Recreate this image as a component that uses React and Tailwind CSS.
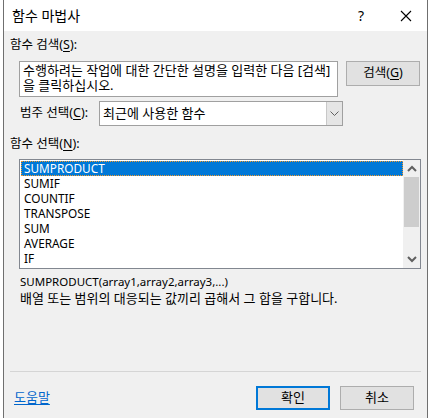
import React from "react";

const items = ["SUMPRODUCT", "SUMIF", "COUNTIF", "TRANSPOSE", "SUM", "AVERAGE", "IF"];

function U({ children }) {
    return <span className="underline underline-offset-2">{children}</span>;
}

export default function App() {
    return (
        <div className="w-[430px] h-[418px] bg-white overflow-hidden" style={{ fontFamily: '"Noto Sans", "Noto Sans CJK KR", sans-serif' }}>
            <div className="ml-[3px] w-[425px] h-[418px] border-x border-[#6f6f6f] flex flex-col text-[12px] text-black">
                {/* title bar */}
                <div className="h-[31px] bg-white flex items-center shrink-0">
                    <span className="ml-[8px] text-[14px]">함수 마법사</span>
                    <span className="ml-auto mr-[36px] text-[14px]">?</span>
                    <svg width="12" height="12" viewBox="0 0 12 12" className="mr-[15px]">
                        <path d="M1 1 L11 11 M11 1 L1 11" stroke="#000" strokeWidth="1.1" />
                    </svg>
                </div>

                <div className="flex-1 bg-[#f0f0f0] px-[6px] flex flex-col">
                    <div className="mt-[6px] h-[16px] leading-[16px] text-[12.5px]">
                        함수 검색(<U>S</U>):
                    </div>

                    <div className="mt-[8px] flex items-start">
                        <div className="ml-[9px] w-[319px] h-[36px] bg-white border border-[#a0a0a0] px-[3px] pt-[1px] leading-[15px] text-[13px] whitespace-nowrap">
                            수행하려는 작업에 대한 간단한 설명을 입력한 다음 [검색]
                            <br />을 클릭하십시오.
                        </div>
                        <button className="ml-[8px] w-[74px] h-[25px] bg-[#e1e1e1] border border-[#adadad] text-[12.5px] flex items-center justify-center">
                            검색(<U>G</U>)
                        </button>
                    </div>

                    <div className="mt-[4px] flex items-center">
                        <span className="ml-[10px] w-[79px] text-[12.5px]">
                            범주 선택(<U>C</U>):
                        </span>
                        <div className="w-[244px] h-[25px] bg-white border border-[#a0a0a0] flex items-stretch">
                            <span className="flex-1 pl-[3px] flex items-center text-[13px]">최근에 사용한 함수</span>
                            <span className="w-[16px] bg-[#e5e5e5] border-l border-[#c8c8c8] flex items-center justify-center">
                                <svg width="9" height="6" viewBox="0 0 9 6">
                                    <path d="M0.5 0.5 L4.5 4.5 L8.5 0.5" fill="none" stroke="#606060" strokeWidth="1" />
                                </svg>
                            </span>
                        </div>
                    </div>

                    <div className="mt-[10px] h-[16px] leading-[16px] text-[12.5px]">
                        함수 선택(<U>N</U>):
                    </div>

                    <div className="mt-[7px] ml-[9px] w-[402px] h-[110px] bg-white border border-[#828790] flex">
                        <div className="flex-1 pt-[1px] pl-[1px] text-[11.8px]">
                            {items.map((it, i) => (
                                <div
                                    key={it}
                                    className={
                                        i === 0
                                            ? "h-[15px] leading-[13px] pl-[2px] bg-[#0078d7] text-white border border-dotted border-[#f39a2b]"
                                            : "h-[15px] leading-[15px] pl-[3px]"
                                    }
                                >
                                    {it}
                                </div>
                            ))}
                        </div>
                        <div className="w-[17px] bg-[#f0f0f0] flex flex-col items-center">
                            <div className="h-[17px] flex items-center justify-center">
                                <svg width="10" height="7" viewBox="0 0 10 7">
                                    <path d="M1 6 L5 2 L9 6" fill="none" stroke="#606060" strokeWidth="2" />
                                </svg>
                            </div>
                            <div className="w-[15px] h-[50px] bg-[#cdcdcd]" />
                            <div className="flex-1" />
                            <div className="h-[17px] flex items-center justify-center">
                                <svg width="10" height="7" viewBox="0 0 10 7">
                                    <path d="M1 1 L5 5 L9 1" fill="none" stroke="#606060" strokeWidth="2" />
                                </svg>
                            </div>
                        </div>
                    </div>

                    <div className="mt-[4px] ml-[10px] leading-[17px] text-[11.5px]">SUMPRODUCT(array1,array2,array3,...)</div>
                    <div className="ml-[10px] leading-[17px] text-[13px]">배열 또는 범위의 대응되는 값끼리 곱해서 그 합을 구합니다.</div>

                    <div className="mt-[64px] h-px bg-[#d5d5d5]" />

                    <div className="mt-[14px] flex items-center">
                        <a className="text-[#0066cc] underline underline-offset-2 ml-[4px] text-[13px]">도움말</a>
                        <button className="ml-auto w-[74px] h-[24px] bg-[#e1e1e1] border-2 border-[#0078d7] flex items-center justify-center text-[13px]">
                            확인
                        </button>
                        <button className="ml-[10px] mr-[7px] w-[74px] h-[24px] bg-[#e1e1e1] border border-[#adadad] flex items-center justify-center text-[13px]">
                            취소
                        </button>
                    </div>
                </div>
            </div>
        </div>
    );
}
